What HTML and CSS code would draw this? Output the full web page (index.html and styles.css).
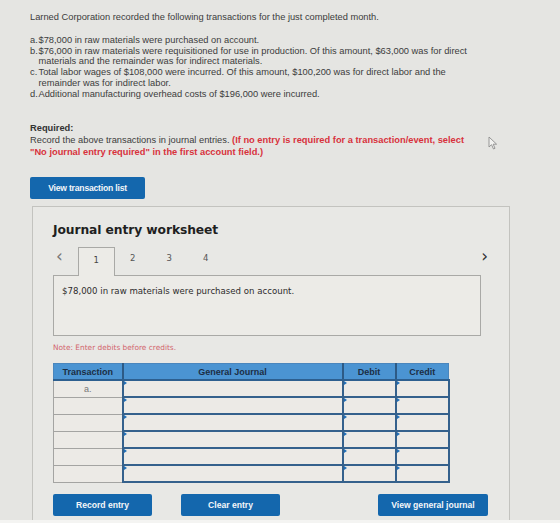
FILE: index.html
```html
<!DOCTYPE html>
<html lang="en">
<head>
    <meta charset="UTF-8">
    <meta name="viewport" content="width=device-width, initial-scale=1.0">
    <title>Journal Entry Worksheet</title>
    <link rel="stylesheet" href="styles.css">
</head>
<body>
    <div class="screen">
        <div class="question">
            <p class="intro">Larned Corporation recorded the following transactions for the just completed month.</p>
            <ol class="events">
                <li><span class="mark">a.</span>$78,000 in raw materials were purchased on account.</li>
                <li><span class="mark">b.</span>$76,000 in raw materials were requisitioned for use in production. Of this amount, $63,000 was for direct materials and the remainder was for indirect materials.</li>
                <li><span class="mark">c.</span>Total labor wages of $108,000 were incurred. Of this amount, $100,200 was for direct labor and the remainder was for indirect labor.</li>
                <li><span class="mark">d.</span>Additional manufacturing overhead costs of $196,000 were incurred.</li>
            </ol>
            <div class="required">
                <div class="required-title">Required:</div>
                <p>Record the above transactions in journal entries. <span class="warn">(If no entry is required for a transaction/event, select "No journal entry required" in the first account field.)</span></p>
            </div>
            <button class="btn btn-list">View transaction list</button>
        </div>

        <div class="worksheet">
            <h2>Journal entry worksheet</h2>
            <div class="tabs">
                <span class="arrow">&lsaquo;</span>
                <span class="tab active">1</span>
                <span class="tab">2</span>
                <span class="tab">3</span>
                <span class="tab">4</span>
                <span class="arrow next">&rsaquo;</span>
            </div>
            <div class="event-box">$78,000 in raw materials were purchased on account.</div>
            <div class="note">Note: Enter debits before credits.</div>

            <table class="journal">
                <thead>
                    <tr>
                        <th class="col-trans">Transaction</th>
                        <th class="col-gj">General Journal</th>
                        <th class="col-num">Debit</th>
                        <th class="col-num">Credit</th>
                    </tr>
                </thead>
                <tbody>
                    <tr><td class="trans">a.</td><td class="field"></td><td class="field"></td><td class="field"></td></tr>
                    <tr><td class="trans"></td><td class="field"></td><td class="field"></td><td class="field"></td></tr>
                    <tr><td class="trans"></td><td class="field"></td><td class="field"></td><td class="field"></td></tr>
                    <tr><td class="trans"></td><td class="field"></td><td class="field"></td><td class="field"></td></tr>
                    <tr><td class="trans"></td><td class="field"></td><td class="field"></td><td class="field"></td></tr>
                    <tr><td class="trans"></td><td class="field"></td><td class="field"></td><td class="field"></td></tr>
                </tbody>
            </table>

            <div class="actions">
                <button class="btn btn-action">Record entry</button>
                <button class="btn btn-action">Clear entry</button>
                <button class="btn btn-action btn-wide">View general journal</button>
            </div>
        </div>

        <svg class="pointer" width="11" height="14" viewBox="0 0 11 14">
            <path d="M1 1 L1 11 L3.5 8.7 L5.5 13 L7 12.3 L5.2 8.2 L8.6 8.2 Z" fill="#f2f2f0" stroke="#8c8c8c" stroke-width="0.9" stroke-linejoin="round"/>
        </svg>
    </div>
</body>
</html>
```

FILE: styles.css
```css
* {
    margin: 0;
    padding: 0;
    box-sizing: border-box;
}

html {
    background: #f4f4f2;
}

body {
    font-family: "Liberation Sans", Arial, sans-serif;
    color: #3c3c3c;
}

.screen {
    position: relative;
    height: 520px;
    overflow: hidden;
    background: #e5e5e2;
}

/* question text */

.question {
    padding: 12px 0 0 30px;
    font-size: 9.3px;
    line-height: 10.8px;
}

.intro {
    margin-bottom: 12px;
}

.events {
    list-style: none;
    width: 445px;
}

.events li {
    padding-left: 8.5px;
    text-indent: -8.5px;
}

.mark {
    display: inline-block;
    text-indent: 0;
    width: 8.5px;
}

.required {
    margin-top: 22px;
    line-height: 12.4px;
    width: 445px;
}

.required-title {
    font-weight: bold;
    color: #333;
}

.warn {
    color: #d8323c;
    font-weight: bold;
}

.btn {
    font-family: "Liberation Sans", Arial, sans-serif;
    font-weight: bold;
    font-size: 8.6px;
    color: #f4f6f9;
    background: #1467ad;
    border: none;
    border-radius: 2px;
    height: 22px;
}

.btn-list {
    display: block;
    width: 115px;
    margin-top: 18px;
    letter-spacing: -0.2px;
}

/* worksheet panel */

.worksheet {
    margin: 7px 0 0 32px;
    width: 478px;
    height: 330px;
    padding: 0 28px 0 20px;
    background: #e8e8e5;
    border: 1px solid #c3c3bf;
    border-bottom: none;
}

.worksheet h2 {
    font-family: "DejaVu Sans", Verdana, sans-serif;
    font-size: 12.3px;
    font-weight: bold;
    color: #1f1f1f;
    margin-top: 16px;
    height: 16px;
    letter-spacing: -0.1px;
}

.tabs {
    display: flex;
    align-items: flex-end;
    height: 29px;
    margin-top: 7px;
    margin-right: -7px;
    font-family: "DejaVu Sans", Verdana, sans-serif;
    font-size: 8.5px;
    color: #555;
}

.arrow {
    font-size: 17px;
    line-height: 24px;
    color: #777;
    width: 25px;
    padding-left: 3px;
    align-self: flex-start;
    margin-top: -2px;
}

.arrow.next {
    margin-left: auto;
    width: auto;
    color: #333;
}

.tab {
    width: 36.5px;
    height: 29px;
    line-height: 24px;
    text-align: center;
}

.tab.active {
    position: relative;
    z-index: 1;
    height: 29px;
    background: #ecebe7;
    border: 1px solid #a9a9a6;
    border-bottom: none;
    margin-bottom: -1px;
    color: #444;
}

.event-box {
    height: 61px;
    background: #ecebe7;
    border: 1px solid #a9a9a6;
    padding: 10px 8px;
    font-family: "DejaVu Sans", Verdana, sans-serif;
    font-size: 8.6px;
    color: #2c2c2c;
}

.note {
    font-family: "DejaVu Sans", Verdana, sans-serif;
    font-size: 7.4px;
    color: #d2646c;
    margin-top: 7px;
    height: 20px;
}

/* journal grid */

.journal {
    width: 396px;
    border-collapse: collapse;
    table-layout: fixed;
}

.journal th {
    height: 17px;
    padding: 0;
    background: #4b94d2;
    color: #1c2e44;
    font-size: 9px;
    font-weight: bold;
    border: 1px solid #4a86bd;
    border-bottom: 2px solid #2d5f8f;
}

.col-trans { width: 69px; }
.col-gj { width: 220px; }
.col-num { width: 53px; }

.journal th + th {
    border-left: 2px solid #2d5a85;
}

.journal td {
    height: 17px;
    padding: 0;
    background: #eceae6;
}

.trans {
    border: 1px solid #a4a4a2;
    text-align: center;
    font-size: 9px;
    color: #777;
}

.field {
    position: relative;
    border: 2px solid #35618c;
}

.field::before {
    content: "";
    position: absolute;
    top: 0;
    left: 0;
    border-left: 3px solid #1f6db6;
    border-top: 2px solid transparent;
    border-bottom: 2px solid transparent;
}

.actions {
    display: flex;
    margin-top: 11px;
    margin-right: -7px;
}

.btn-action {
    width: 99px;
    margin-right: 29px;
}

.btn-wide {
    width: 110px;
    margin-left: auto;
    margin-right: 0;
}

.pointer {
    position: absolute;
    left: 488px;
    top: 136px;
}
```
